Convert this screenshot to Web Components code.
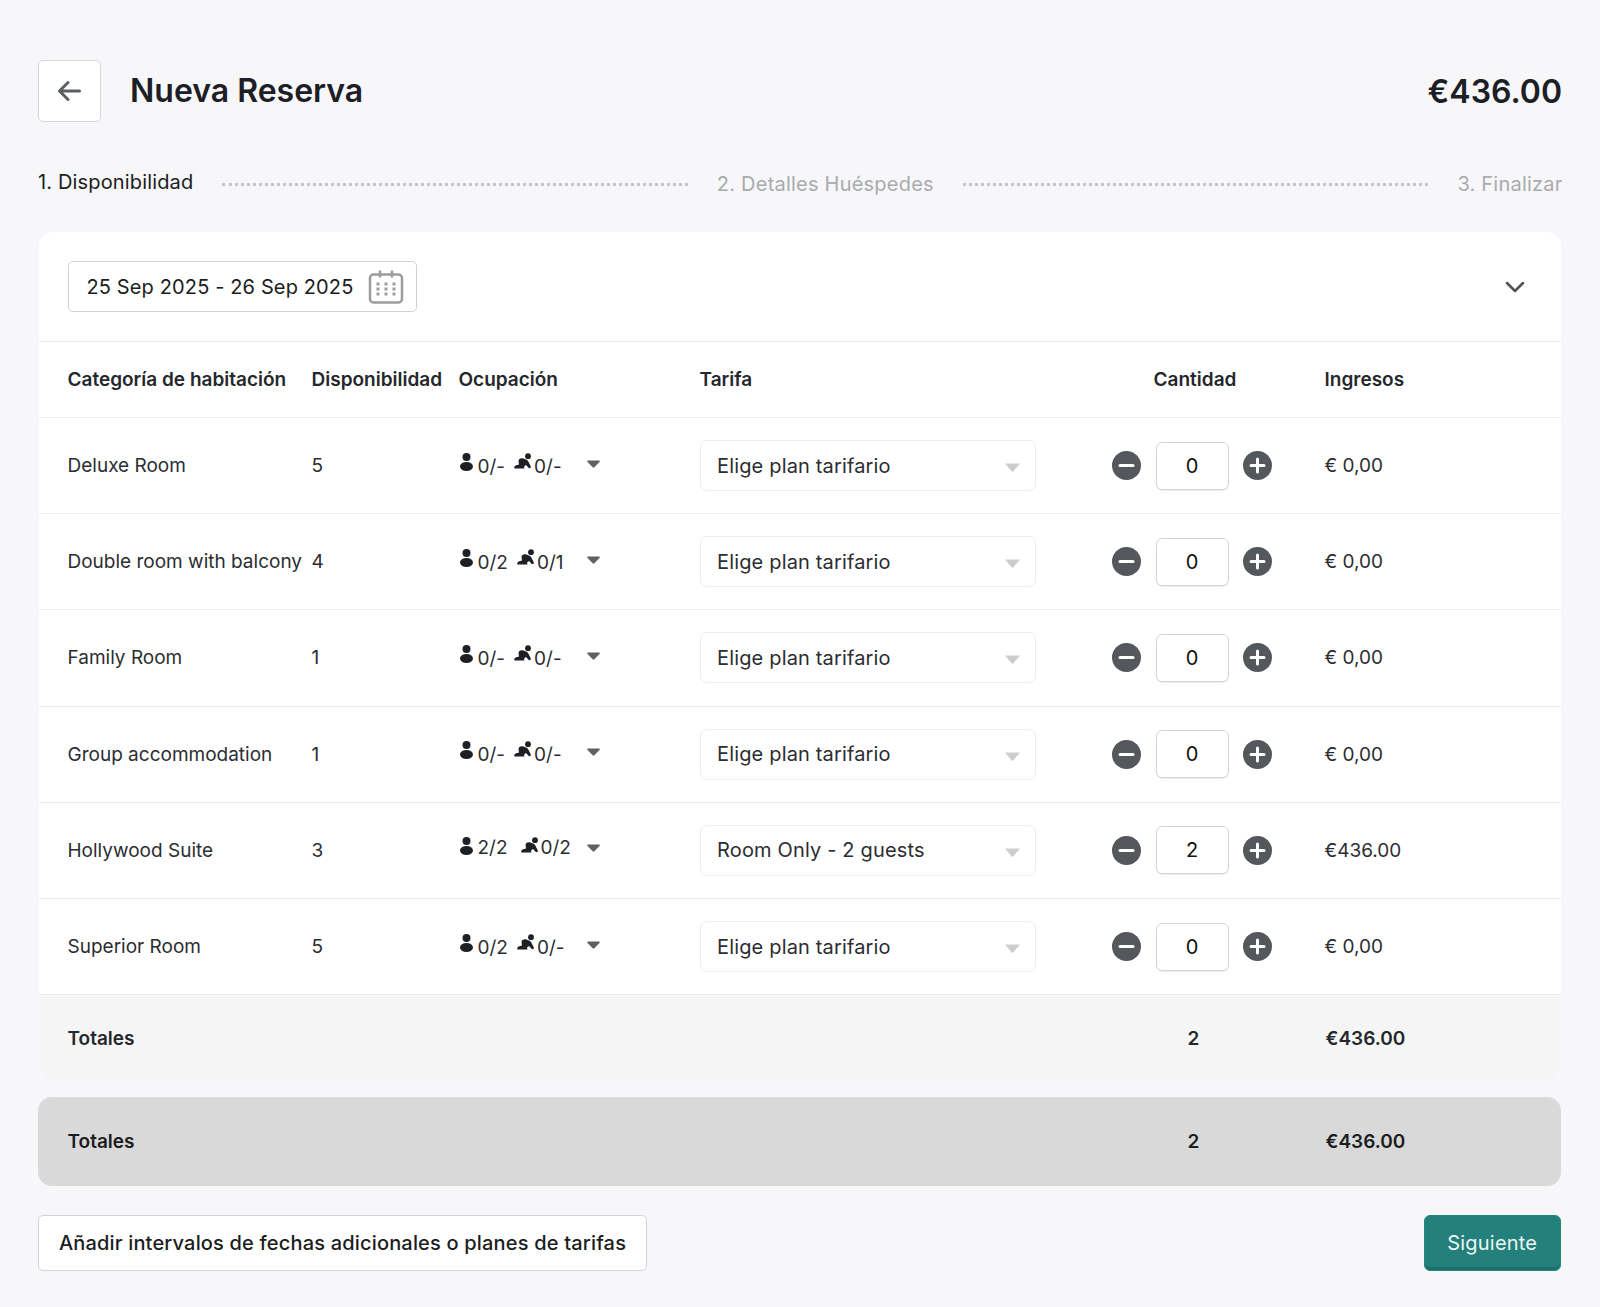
<!DOCTYPE html>
<html lang="es">
<head>
<meta charset="utf-8">
<title>Nueva Reserva</title>
<style>
  html, body { margin: 0; background: #f7f7f9; }
  body { font-family: Inter, "Liberation Sans", sans-serif; color: #1b1d21; }
</style>
</head>
<body>
<booking-page>
  <booking-header slot="header" total="€436.00">Nueva Reserva</booking-header>
  <booking-steps slot="steps"></booking-steps>
  <booking-card slot="card">
    <room-row name="Deluxe Room" avail="5" adults="0/-" kids="0/-" plan="Elige plan tarifario" qty="0" income="€ 0,00"></room-row>
    <room-row name="Double room with balcony" avail="4" adults="0/2" kids="0/1" gap="9" plan="Elige plan tarifario" qty="0" income="€ 0,00"></room-row>
    <room-row name="Family Room" avail="1" adults="0/-" kids="0/-" plan="Elige plan tarifario" qty="0" income="€ 0,00"></room-row>
    <room-row name="Group accommodation" avail="1" adults="0/-" kids="0/-" plan="Elige plan tarifario" qty="0" income="€ 0,00"></room-row>
    <room-row lift name="Hollywood Suite" avail="3" adults="2/2" kids="0/2" gap="13" plan="Room Only - 2 guests" qty="2" income="€436.00"></room-row>
    <room-row name="Superior Room" avail="5" adults="0/2" kids="0/-" gap="9" plan="Elige plan tarifario" qty="0" income="€ 0,00"></room-row>
    <totals-row class="inner" count="2" amount="€436.00"></totals-row>
  </booking-card>
  <totals-row slot="totals" dark count="2" amount="€436.00"></totals-row>
  <booking-footer slot="footer"></booking-footer>
</booking-page>

<script>
const pageTpl = document.createElement('template');
pageTpl.innerHTML = `
<style>
  :host { display: block; box-sizing: border-box; height: 1307px; padding: 60px 39px 0 38px; }
  .steps { margin-top: 45px; }
  .card { margin-top: 33px; }
  .totals { margin-top: 16px; }
  .footer { margin-top: 29px; }
</style>
<slot name="header"></slot>
<div class="steps"><slot name="steps"></slot></div>
<div class="card"><slot name="card"></slot></div>
<div class="totals"><slot name="totals"></slot></div>
<div class="footer"><slot name="footer"></slot></div>`;

class BookingPage extends HTMLElement {
  constructor() {
    super();
    this.attachShadow({ mode: 'open' });
    this.shadowRoot.appendChild(pageTpl.content.cloneNode(true));
  }
}

const headerTpl = document.createElement('template');
headerTpl.innerHTML = `
<style>
  :host { display: flex; align-items: center; height: 62px; }
  .back {
    box-sizing: border-box; width: 63px; height: 62px; background: #fff;
    border: 1px solid #d5d6d9; border-radius: 5px; padding-right: 2px;
    display: flex; align-items: center; justify-content: center;
  }
  h1 { margin: 0 0 0 29px; font-size: 32px; line-height: 40px; font-weight: 600; color: #1c2026; flex: 1; }
  .total { font-size: 32px; font-weight: 600; color: #1c2026; margin-right: -1px; }
</style>
<div class="back">
  <svg width="24" height="24" viewBox="0 0 24 24" fill="none" stroke="#5b5e63" stroke-width="3" stroke-linecap="round" stroke-linejoin="round"><path d="M22.5 12H2.5M11 3.5L2.5 12L11 20.5"/></svg>
</div>
<h1><slot></slot></h1>
<div class="total"></div>`;

class BookingHeader extends HTMLElement {
  constructor() {
    super();
    this.attachShadow({ mode: 'open' });
    this.shadowRoot.appendChild(headerTpl.content.cloneNode(true));
    this.shadowRoot.querySelector('.total').textContent = this.getAttribute('total');
  }
}

const stepsTpl = document.createElement('template');
stepsTpl.innerHTML = `
<style>
  :host { display: flex; align-items: center; height: 32px; font-size: 20px; color: #1b1d21; letter-spacing: .15px; }
  .off { color: #a9abae; position: relative; top: 1px; letter-spacing: .22px; }
  .last { margin-right: -1.5px; }
  .on { position: relative; top: -1px; }
  i { flex: 1; height: 0; margin: 2px 29px 0; border-top: 3px dotted #c4c5c8; }
</style>
<span class="on">1. Disponibilidad</span>
<i></i>
<span class="off">2. Detalles Huéspedes</span>
<i></i>
<span class="off last">3. Finalizar</span>`;

class BookingSteps extends HTMLElement {
  constructor() {
    super();
    this.attachShadow({ mode: 'open' });
    this.shadowRoot.appendChild(stepsTpl.content.cloneNode(true));
  }
}

const cardTpl = document.createElement('template');
cardTpl.innerHTML = `
<style>
  :host { display: block; margin-left: 1px; background: #fff; border-radius: 14px; overflow: hidden; }
  .top {
    display: flex; align-items: center; justify-content: space-between;
    height: 110px; box-sizing: border-box; padding: 0 36px 0 29px;
    border-bottom: 1px solid #ececee;
  }
  .date {
    box-sizing: border-box; width: 349px; height: 51px; background: #fff;
    border: 1px solid #d0d1d4; border-radius: 5px;
    display: flex; align-items: center; justify-content: space-between;
    padding: 0 12px 0 17.5px; font-size: 20px; color: #1b1d21; letter-spacing: .13px;
  }
  .head {
    display: grid; grid-template-columns: 244px 147px 241px 412px 160px 1fr;
    height: 76px; box-sizing: border-box; padding-left: 28.5px; align-items: center;
    font-size: 19px; font-weight: 600; color: #24272c;
    border-bottom: 1px solid #ececee;
  }
  .head .qty { text-align: center; position: relative; left: 3.5px; }
  .head .inc { padding-left: 53px; }
</style>
<div class="top">
  <div class="date">
    <span>25 Sep 2025 - 26 Sep 2025</span>
    <svg width="36" height="34" viewBox="0 0 36 34" fill="none" stroke="#9b9c9f"><rect x="2" y="4.500" width="32" height="28" rx="3.500" stroke-width="2.500"/><path d="M12 0.500v7M24 0.500v7" stroke-width="2.500"/><path d="M10 12.500v3M18 12.500v3M26 12.500v3M10 17.500v3M18 17.500v3M26 17.500v3M10 22.500v3M18 22.500v3M26 22.500v3" stroke-width="3"/></svg>
  </div>
  <svg width="20" height="12" viewBox="0 0 20 12" fill="none" stroke="#4e5156" stroke-width="2.500" stroke-linecap="round" stroke-linejoin="round"><path d="M2 2L10 10L18 2"/></svg>
</div>
<div class="head">
  <span>Categoría de habitación</span><span>Disponibilidad</span><span>Ocupación</span><span>Tarifa</span><span class="qty">Cantidad</span><span class="inc">Ingresos</span>
</div>
<slot></slot>`;

class BookingCard extends HTMLElement {
  constructor() {
    super();
    this.attachShadow({ mode: 'open' });
    this.shadowRoot.appendChild(cardTpl.content.cloneNode(true));
  }
}

const rowTpl = document.createElement('template');
rowTpl.innerHTML = `
<style>
  :host {
    display: grid; grid-template-columns: 244px 147px 241.5px 412px 160px 1fr;
    height: 96.2px; box-sizing: border-box; padding-left: 28.5px; align-items: center;
    font-size: 19px; color: #2b2d31; border-bottom: 1px solid #ececee;
  }
  .occ { display: flex; align-items: flex-start; position: relative; height: 24px; top: -1px; font-size: 19px; }
  .occ span { line-height: 24px; position: relative; top: 2px; }
  :host([lift]) .occ span { top: -1px; }
  .occ svg { flex: none; }
  .child { margin-right: 2px; }
  .adult { margin: 0 5px 0 1px; }
  .caret { position: absolute; left: 128px; top: 7px; }
  .select {
    box-sizing: border-box; width: 336px; height: 51px; border: 1px solid #eeeeef; border-radius: 7px;
    display: flex; align-items: center; justify-content: space-between;
    padding: 0 15px 0 16px; font-size: 20px; color: #2b2d31; letter-spacing: .16px;
  }
  .select svg { position: relative; top: 2px; }
  .qty { display: flex; align-items: center; justify-content: space-between; }
  .round { width: 29px; height: 29px; display: block; }
  .num {
    box-sizing: border-box; width: 73px; height: 48px; border: 1px solid #d3d4d6; border-radius: 6px;
    box-shadow: 0 1px 1px rgba(0,0,0,.08); display: flex; align-items: center; justify-content: center;
    font-size: 20px; color: #111;
  }
  .inc { padding-left: 52.5px; }
</style>
<span class="name"></span>
<span class="avail"></span>
<div class="occ">
  <svg class="adult" width="13" height="18" viewBox="0 0 13 18" fill="#1d2024"><circle cx="6.500" cy="4" r="4"/><ellipse cx="6.500" cy="13.500" rx="6.500" ry="4.500"/></svg>
  <span class="adults"></span>
  <svg class="child" width="18" height="16" viewBox="0 0 18 16" fill="#1d2024"><circle cx="14" cy="3.200" r="2.900"/><path d="M4.500 8C5 5.500 7 5 9.500 5.500L13 7C14.500 8 15.500 11 16.800 13.500C17.200 15 15.500 15.800 14.500 14.800L12 12L10 13.500L10.500 15.500H0.500C0 15.500 0 13 1.500 12.500L5 11.500Z"/></svg>
  <span class="kids"></span>
  <svg class="caret" width="13" height="8" viewBox="0 0 13 8" fill="#5d6065"><path d="M1 0.500H12C12.800 0.500 13 1.300 12.500 1.900L7.300 7.300Q6.500 8 5.700 7.300L0.500 1.900C0 1.300 0.200 0.500 1 0.500Z"/></svg>
</div>
<div class="select">
  <span class="plan"></span>
  <svg width="15" height="9" viewBox="0 0 15 9" fill="#cdcdcf"><path d="M0 0.500H15L8.200 8.400Q7.500 9 6.800 8.400Z"/></svg>
</div>
<div class="qty">
  <svg class="round" viewBox="0 0 29 29"><circle cx="14.500" cy="14.500" r="14.500" fill="#54575c"/><path d="M8 14.500H21" stroke="#fff" stroke-width="3" stroke-linecap="round"/></svg>
  <div class="num"></div>
  <svg class="round" viewBox="0 0 29 29"><circle cx="14.500" cy="14.500" r="14.500" fill="#54575c"/><path d="M8 14.500H21M14.500 8V21" stroke="#fff" stroke-width="3" stroke-linecap="round"/></svg>
</div>
<span class="inc"></span>`;

class RoomRow extends HTMLElement {
  constructor() {
    super();
    this.attachShadow({ mode: 'open' });
    this.shadowRoot.appendChild(rowTpl.content.cloneNode(true));
    const q = s => this.shadowRoot.querySelector(s);
    q('.name').textContent = this.getAttribute('name');
    q('.avail').textContent = this.getAttribute('avail');
    q('.adults').textContent = this.getAttribute('adults');
    q('.kids').textContent = this.getAttribute('kids');
    q('.plan').textContent = this.getAttribute('plan');
    q('.num').textContent = this.getAttribute('qty');
    q('.inc').textContent = this.getAttribute('income');
    q('.child').style.marginLeft = (this.getAttribute('gap') || 9) + 'px';
  }
}

const totalsTpl = document.createElement('template');
totalsTpl.innerHTML = `
<style>
  :host {
    display: grid; grid-template-columns: 1120px 138px 1fr;
    box-sizing: border-box; height: 86px; padding-left: 28.5px; align-items: center;
    background: #f5f5f6; font-size: 19px; font-weight: 600; color: #24272c;
  }
  :host([dark]) { height: 89px; background: #d9d9da; border-radius: 14px; padding-left: 29.5px; color: #1b1d21; }
</style>
<span>Totales</span>
<span class="count"></span>
<span class="amount"></span>`;

class TotalsRow extends HTMLElement {
  constructor() {
    super();
    this.attachShadow({ mode: 'open' });
    this.shadowRoot.appendChild(totalsTpl.content.cloneNode(true));
    this.shadowRoot.querySelector('.count').textContent = this.getAttribute('count');
    this.shadowRoot.querySelector('.amount').textContent = this.getAttribute('amount');
  }
}

const footerTpl = document.createElement('template');
footerTpl.innerHTML = `
<style>
  :host { display: flex; justify-content: space-between; align-items: flex-start; }
  .add {
    box-sizing: border-box; height: 56px; width: 609px; background: #fff;
    border: 1px solid #d3d4d6; border-radius: 5px; display: flex; align-items: center; justify-content: center;
    font-size: 20px; font-weight: 500; color: #1b1d21; letter-spacing: .18px;
  }
  .next {
    box-sizing: border-box; height: 56px; width: 137.5px; background: #23807a;
    border: 1px solid #1d8a7e; border-radius: 6px; box-shadow: inset 0 -3px 0 #1e6e69;
    display: flex; align-items: center; justify-content: center;
    font-size: 20px; font-weight: 400; color: #eef6f5; letter-spacing: .2px;
  }
</style>
<div class="add">Añadir intervalos de fechas adicionales o planes de tarifas</div>
<div class="next">Siguiente</div>`;

class BookingFooter extends HTMLElement {
  constructor() {
    super();
    this.attachShadow({ mode: 'open' });
    this.shadowRoot.appendChild(footerTpl.content.cloneNode(true));
  }
}

customElements.define('booking-page', BookingPage);
customElements.define('booking-header', BookingHeader);
customElements.define('booking-steps', BookingSteps);
customElements.define('booking-card', BookingCard);
customElements.define('room-row', RoomRow);
customElements.define('totals-row', TotalsRow);
customElements.define('booking-footer', BookingFooter);
</script>
</body>
</html>
